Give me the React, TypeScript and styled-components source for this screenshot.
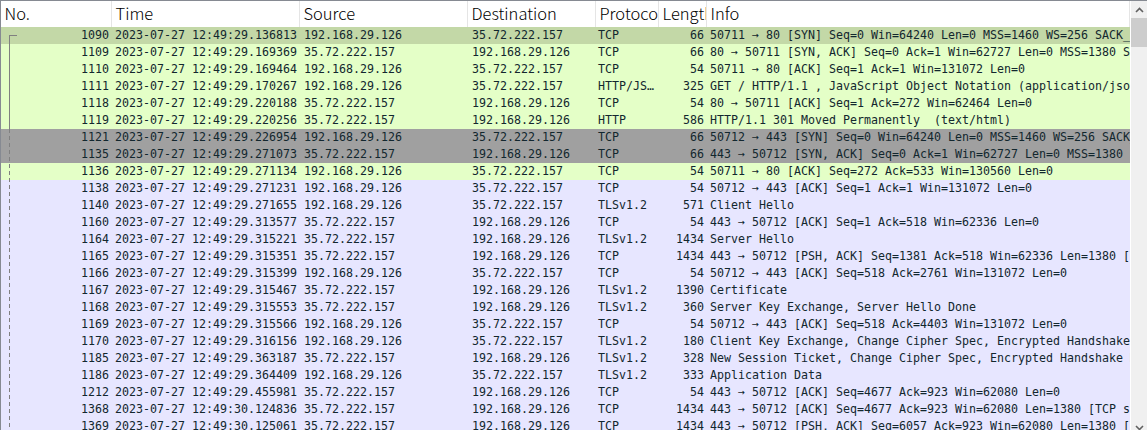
import React from "react";
import styled, { createGlobalStyle } from "styled-components";

const Global = createGlobalStyle`
  html, body { margin: 0; padding: 0; background: #fff; overflow: hidden; }
`;

const COLS = [111, 188, 168, 128, 63, 48];

const Frame = styled.div`
  position: relative;
  width: 1147px;
  height: 430px;
  box-sizing: border-box;
  border-top: 1px solid #868a92;
  border-left: 1px solid #868a92;
  display: flex;
  align-items: flex-start;
  overflow: hidden;
`;
const Table = styled.div`
  width: 1129px;
  flex: none;
  display: flex;
  flex-direction: column;
`;
const Header = styled.div`
  height: 26px;
  flex: none;
  display: flex;
  background: #fff;
`;
const HeaderCell = styled.div<{ $w?: number }>`
  ${(p) => (p.$w ? `width: ${p.$w}px; flex: none;` : "flex: 1;")}
  box-sizing: border-box;
  padding-left: 3.5px;
  border-right: 1px solid #e5e5e5;
  overflow: hidden;
  white-space: nowrap;
  font: 300 16.5px/24px "Noto Sans CJK JP", "Noto Sans", sans-serif;
  color: #000;
`;
const Row = styled.div<{ $bg: string }>`
  height: 17px;
  flex: none;
  display: flex;
  background: ${(p) => p.$bg};
  font: 11.63px/17px "DejaVu Sans Mono", monospace;
  color: #12272e;
  white-space: pre;
`;
const Cell = styled.div<{ $w?: number; $right?: boolean; $left?: number }>`
  ${(p) => (p.$w ? `width: ${p.$w}px; flex: none;` : "flex: 1; min-width: 0;")}
  box-sizing: border-box;
  overflow: hidden;
  padding: 0 3px 0 ${(p) => p.$left ?? 3}px;
  text-align: ${(p) => (p.$right ? "right" : "left")};
`;
const Tree = styled.svg`
  position: absolute;
  left: 0;
  top: 0;
`;
const Scrollbar = styled.div`
  flex: 1;
  height: 435px;
  display: flex;
  flex-direction: column;
  background: #f0f0f0;
  border-left: 1px solid #fff;
`;
const ArrowButton = styled.div`
  height: 17px;
  flex: none;
  display: flex;
  align-items: center;
  justify-content: center;
`;
const Track = styled.div`
  flex: 1;
`;
const Thumb = styled.div`
  height: 29px;
  background: #cdcdcd;
`;

const G = "#e4ffc7", S = "#c3d8a7", D = "#a0a0a0", L = "#e7e6ff";
const A = "192.168.29.126", B = "35.72.222.157";
type R = [string, string, 0 | 1, string, string, string, string];
const T = "2023-07-27 12:49:";
const rows: R[] = [
  ["1090", "29.136813", 0, "TCP", "66", "50711 → 80 [SYN] Seq=0 Win=64240 Len=0 MSS=1460 WS=256 SACK_PERM", S],
  ["1109", "29.169369", 1, "TCP", "66", "80 → 50711 [SYN, ACK] Seq=0 Ack=1 Win=62727 Len=0 MSS=1380 SACK_PERM", G],
  ["1110", "29.169464", 0, "TCP", "54", "50711 → 80 [ACK] Seq=1 Ack=1 Win=131072 Len=0", G],
  ["1111", "29.170267", 0, "HTTP/JS…", "325", "GET / HTTP/1.1 , JavaScript Object Notation (application/json)", G],
  ["1118", "29.220188", 1, "TCP", "54", "80 → 50711 [ACK] Seq=1 Ack=272 Win=62464 Len=0", G],
  ["1119", "29.220256", 1, "HTTP", "586", "HTTP/1.1 301 Moved Permanently  (text/html)", G],
  ["1121", "29.226954", 0, "TCP", "66", "50712 → 443 [SYN] Seq=0 Win=64240 Len=0 MSS=1460 WS=256 SACK_PERM", D],
  ["1135", "29.271073", 1, "TCP", "66", "443 → 50712 [SYN, ACK] Seq=0 Ack=1 Win=62727 Len=0 MSS=1380 SACK_PERM", D],
  ["1136", "29.271134", 0, "TCP", "54", "50711 → 80 [ACK] Seq=272 Ack=533 Win=130560 Len=0", G],
  ["1138", "29.271231", 0, "TCP", "54", "50712 → 443 [ACK] Seq=1 Ack=1 Win=131072 Len=0", L],
  ["1140", "29.271655", 0, "TLSv1.2", "571", "Client Hello", L],
  ["1160", "29.313577", 1, "TCP", "54", "443 → 50712 [ACK] Seq=1 Ack=518 Win=62336 Len=0", L],
  ["1164", "29.315221", 1, "TLSv1.2", "1434", "Server Hello", L],
  ["1165", "29.315351", 1, "TCP", "1434", "443 → 50712 [PSH, ACK] Seq=1381 Ack=518 Win=62336 Len=1380 [TCP", L],
  ["1166", "29.315399", 0, "TCP", "54", "50712 → 443 [ACK] Seq=518 Ack=2761 Win=131072 Len=0", L],
  ["1167", "29.315467", 1, "TLSv1.2", "1390", "Certificate", L],
  ["1168", "29.315553", 1, "TLSv1.2", "360", "Server Key Exchange, Server Hello Done", L],
  ["1169", "29.315566", 0, "TCP", "54", "50712 → 443 [ACK] Seq=518 Ack=4403 Win=131072 Len=0", L],
  ["1170", "29.316156", 0, "TLSv1.2", "180", "Client Key Exchange, Change Cipher Spec, Encrypted Handshake Message", L],
  ["1185", "29.363187", 1, "TLSv1.2", "328", "New Session Ticket, Change Cipher Spec, Encrypted Handshake Message", L],
  ["1186", "29.364409", 0, "TLSv1.2", "333", "Application Data", L],
  ["1212", "29.455981", 1, "TCP", "54", "443 → 50712 [ACK] Seq=4677 Ack=923 Win=62080 Len=0", L],
  ["1368", "30.124836", 1, "TCP", "1434", "443 → 50712 [ACK] Seq=4677 Ack=923 Win=62080 Len=1380 [TCP segment", L],
  ["1369", "30.125061", 1, "TCP", "1434", "443 → 50712 [PSH, ACK] Seq=6057 Ack=923 Win=62080 Len=1380 [TCP", L],
];
const titles = ["No.", "Time", "Source", "Destination", "Protocol", "Length"];

export default function App() {
  return (
    <Frame>
      <Global />
      <Table>
        <Header>
          {titles.map((t, i) => (
            <HeaderCell key={t} $w={COLS[i]}>{t}</HeaderCell>
          ))}
          <HeaderCell>Info</HeaderCell>
        </Header>
        {rows.map((r) => (
          <Row key={r[0]} $bg={r[6]}>
            <Cell $w={COLS[0]} $right>{r[0]}</Cell>
            <Cell $w={COLS[1]}>{T + r[1]}</Cell>
            <Cell $w={COLS[2]} $left={4}>{r[2] ? B : A}</Cell>
            <Cell $w={COLS[3]} $left={4}>{r[2] ? A : B}</Cell>
            <Cell $w={COLS[4]} $left={2}>{r[3]}</Cell>
            <Cell $w={COLS[5]} $right>{r[4]}</Cell>
            <Cell>{r[5]}</Cell>
          </Row>
        ))}
      </Table>
      <Tree width="20" height="430">
        <path d="M8.5 34.5H16M8.5 34V128" stroke="#808080" fill="none" />
        <path d="M8.5 128V430" stroke="#808080" strokeDasharray="4 3" fill="none" />
      </Tree>
      <Scrollbar>
        <ArrowButton>
          <svg width="9" height="6" viewBox="0 0 9 6"><path d="M1 5l3.5-3.5L8 5" stroke="#606060" strokeWidth="1.6" fill="none" /></svg>
        </ArrowButton>
        <Thumb />
        <Track />
        <ArrowButton>
          <svg width="9" height="6" viewBox="0 0 9 6"><path d="M1 1l3.5 3.5L8 1" stroke="#606060" strokeWidth="1.6" fill="none" /></svg>
        </ArrowButton>
      </Scrollbar>
    </Frame>
  );
}
